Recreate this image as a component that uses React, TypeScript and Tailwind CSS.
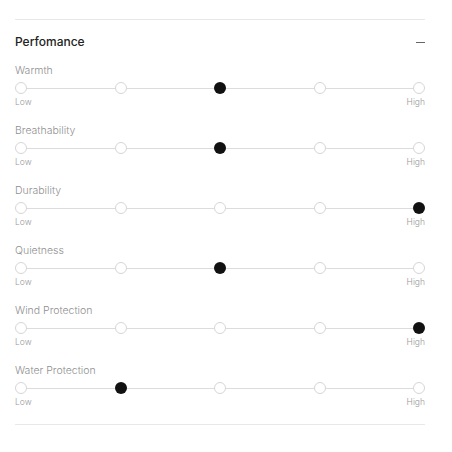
import { Fragment } from 'react'

type Rating = {
  label: string
  value: number
}

const ratings: Rating[] = [
  { label: 'Warmth', value: 2 },
  { label: 'Breathability', value: 2 },
  { label: 'Durability', value: 4 },
  { label: 'Quietness', value: 2 },
  { label: 'Wind Protection', value: 4 },
  { label: 'Water Protection', value: 1 },
]

function Scale({ value }: { value: number }) {
  return (
    <div className="flex items-center h-3 mt-[3px]">
      {[0, 1, 2, 3, 4].map((i) => (
        <Fragment key={i}>
          {i > 0 && <div className="flex-1 h-px bg-[#dcdcdc]" />}
          {i === value ? (
            <div className="w-3 h-3 rounded-full bg-[#111111] shrink-0" />
          ) : (
            <div className="w-3 h-3 rounded-full border border-[#d6d6d6] bg-white shrink-0" />
          )}
        </Fragment>
      ))}
    </div>
  )
}

export default function App() {
  return (
    <div className="w-[452px] h-[452px] bg-white pl-[15px] pt-[19px]" style={{ fontFamily: 'Inter, "Noto Sans", sans-serif' }}>
      <div className="w-[410px] border-t border-b border-[#e8e8e8] pb-[15px]">
        {/* Header */}
        <div className="flex items-center justify-between h-5 mt-[12px] mb-[11px]">
          <span className="text-[12px] font-medium text-[#222222]">Perfomance</span>
          <div className="w-[9px] h-px bg-[#666666]" />
        </div>

        {/* Ratings */}
        <div className="flex flex-col gap-[14px]">
          {ratings.map((r) => (
            <div key={r.label}>
              <div className="text-[10.5px] leading-4 font-light text-[#8f8f8f]">{r.label}</div>
              <Scale value={r.value} />
              <div className="flex justify-between text-[8.5px] leading-[14px] mt-px font-light text-[#999999]">
                <span>Low</span>
                <span>High</span>
              </div>
            </div>
          ))}
        </div>
      </div>
    </div>
  )
}
